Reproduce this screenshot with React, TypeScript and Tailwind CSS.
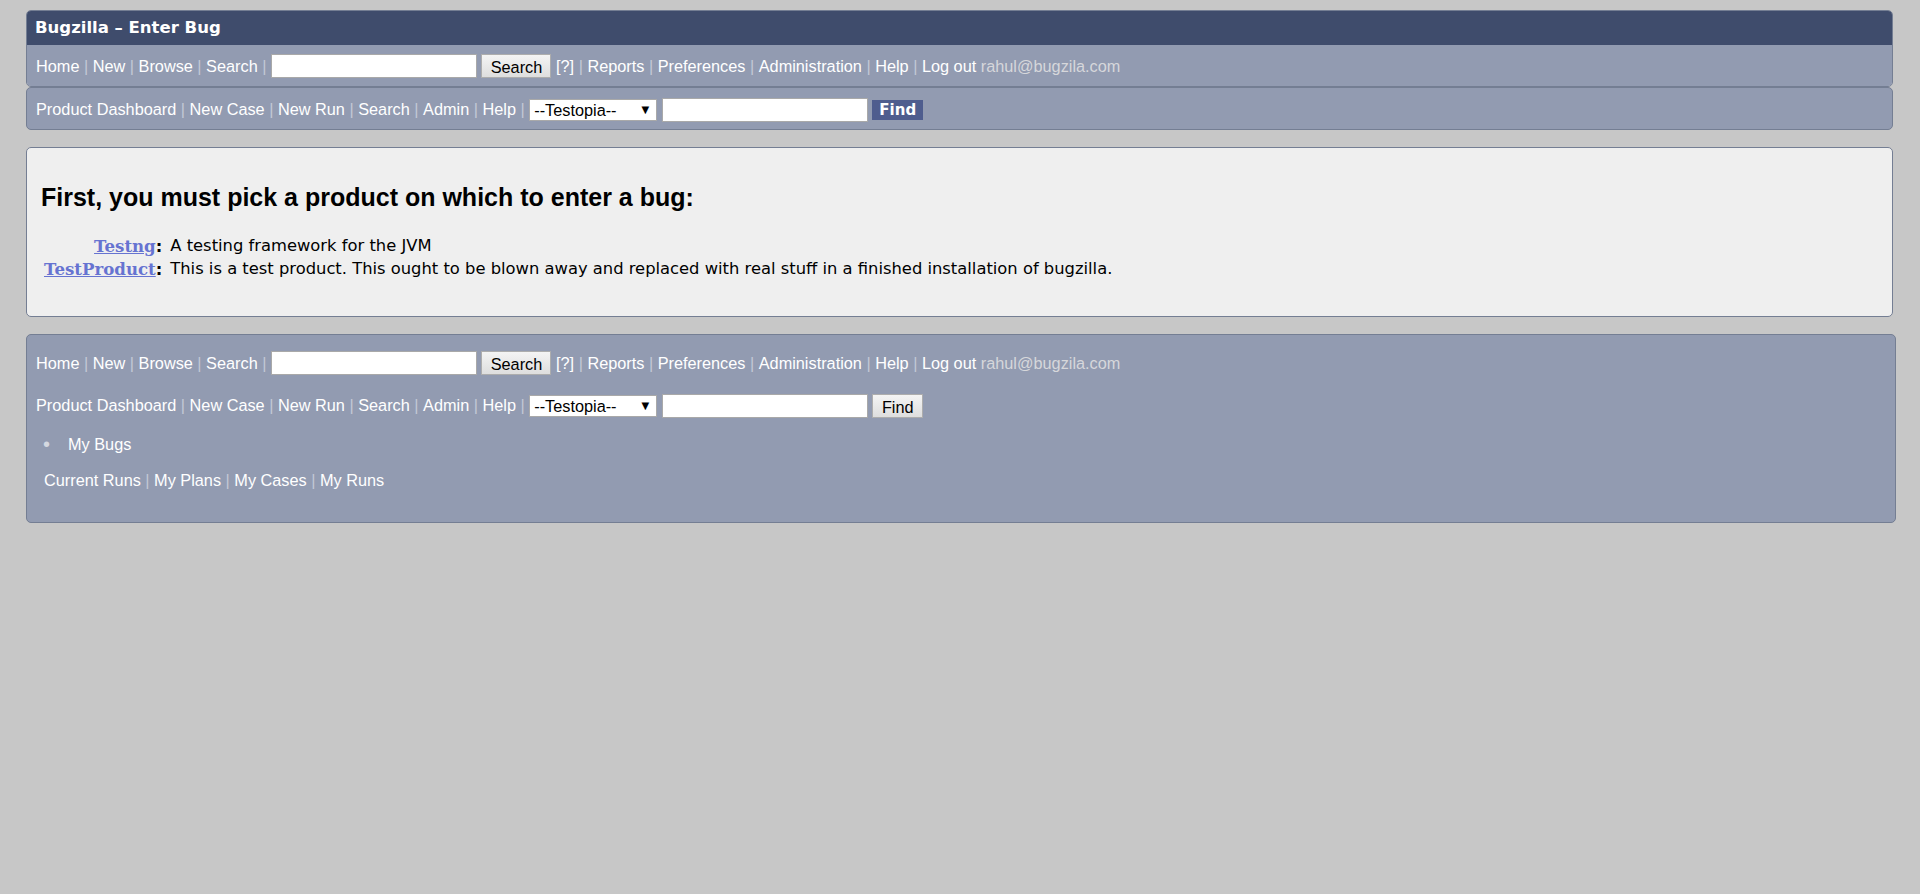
import React from "react";

const Sep = () => <span className="px-[4.53px] text-[#c3c8d6]">|</span>;

const Link = ({ children, className = "" }: { children: React.ReactNode; className?: string }) => (
  <a href="#" className={`text-white no-underline ${className}`}>
    {children}
  </a>
);

const GreyButton = ({ children, w }: { children: React.ReactNode; w: string }) => (
  <button
    className={`ml-[4.53px] h-[24px] ${w} border border-[#adadad] bg-linear-to-b from-[#f4f4f4] to-[#dedede] text-black`}
  >
    {children}
  </button>
);

const TextInput = ({ className = "" }: { className?: string }) => (
  <input type="text" className={`h-[24px] w-[206px] border border-[#a9a9a9] bg-white ${className}`} />
);

const Select = () => (
  <span className="relative block">
    <select className="block h-[22px] w-[128px] appearance-none border border-[#a9a9a9] bg-white pl-[4px] leading-[20px] text-black">
      <option>--Testopia--</option>
    </select>
    <span className="pointer-events-none absolute right-[8px] top-[5px] font-['DejaVu_Sans',sans-serif] text-[10px] leading-[12px] text-black">
      ▼
    </span>
  </span>
);

const MainLinks = () => (
  <div className="flex items-center whitespace-nowrap">
    <Link>Home</Link>
    <Sep />
    <Link>New</Link>
    <Sep />
    <Link>Browse</Link>
    <Sep />
    <Link>Search</Link>
    <Sep />
    <TextInput />
    <GreyButton w="w-[70px]">Search</GreyButton>
    <Link className="ml-[4.53px]">[?]</Link>
    <Sep />
    <Link>Reports</Link>
    <Sep />
    <Link>Preferences</Link>
    <Sep />
    <Link>Administration</Link>
    <Sep />
    <Link>Help</Link>
    <Sep />
    <Link>Log out</Link>
    <span className="ml-[4.53px] text-[#d6d7db]">rahul@bugzila.com</span>
  </div>
);

const TestopiaLinks = ({ headerFind }: { headerFind: boolean }) => (
  <div className="flex items-center whitespace-nowrap">
    <Link>Product Dashboard</Link>
    <Sep />
    <Link>New Case</Link>
    <Sep />
    <Link>New Run</Link>
    <Sep />
    <Link>Search</Link>
    <Sep />
    <Link>Admin</Link>
    <Sep />
    <Link>Help</Link>
    <Sep />
    <Select />
    <TextInput className="ml-[4.53px]" />
    {headerFind ? (
      <button className="ml-[4.53px] h-[20px] w-[51px] bg-[#4f5d8e] font-['DejaVu_Sans',Verdana,sans-serif] text-[15px] font-bold leading-[20px] text-white">
        Find
      </button>
    ) : (
      <GreyButton w="w-[51px]">Find</GreyButton>
    )}
  </div>
);

const products = [
  { name: "Testng", desc: "A testing framework for the JVM" },
  {
    name: "TestProduct",
    desc: "This is a test product. This ought to be blown away and replaced with real stuff in a finished installation of bugzilla.",
  },
];

export default function App() {
  return (
    <div className="min-h-[894px] bg-[#c7c7c7] pl-[26px] pr-[27px] pt-[10px] font-['Liberation_Sans',Arial,sans-serif] text-[16.3px]">
      {/* Header */}
      <div className="overflow-hidden rounded-[5px] border border-[#747e93]">
        <div className="flex h-[34px] items-center bg-[#3f4c6c] pl-[8px] font-['DejaVu_Sans',Verdana,sans-serif] text-[16.5px] font-bold text-white">
          Bugzilla – Enter Bug
        </div>
        <div className="flex h-[41px] items-center bg-[#929bb1] pl-[9px] pt-[1px]">
          <MainLinks />
        </div>
      </div>
      <div className="flex h-[43px] items-center rounded-[5px] border border-[#747e93] bg-[#929bb1] pl-[9px] pt-[2px]">
        <TestopiaLinks headerFind />
      </div>

      {/* Body */}
      <div className="mt-[17px] rounded-[5px] border border-[#747e93] bg-[#efefef] pb-[35px] pl-[14px] pt-[35px]">
        <h2 className="mb-[23px] font-['Liberation_Sans',Arial,sans-serif] text-[25px] font-bold leading-[29px] text-black">
          First, you must pick a product on which to enter a bug:
        </h2>
        <div className="ml-[3px] grid grid-cols-[auto_1fr] gap-x-[8px] font-['DejaVu_Sans',Verdana,sans-serif] text-[16.35px] leading-[22px] text-black">
          {products.map((p) => (
            <React.Fragment key={p.name}>
              <div className="text-right font-bold">
                <a href="#" className="font-['DejaVu_Serif',serif] text-[16.6px] text-[#6673d1] underline">
                  {p.name}
                </a>
                <span>:</span>
              </div>
              <div>{p.desc}</div>
            </React.Fragment>
          ))}
        </div>
      </div>

      {/* Footer */}
      <div className="mr-[-3px] mt-[17px] rounded-[5px] border border-[#747e93] bg-[#929bb1] pb-[32px] pl-[9px] pt-[7px]">
        <div className="flex h-[42px] items-center">
          <MainLinks />
        </div>
        <div className="flex h-[43px] items-center">
          <TestopiaLinks headerFind={false} />
        </div>
        <ul className="mt-[7px] flex h-[20px] items-center">
          <li className="flex items-center">
            <span className="w-[32px] pl-[7px] text-[20px] leading-[20px] text-[#d5d8e0]">•</span>
            <Link>My Bugs</Link>
          </li>
        </ul>
        <div className="mt-[16px] flex h-[20px] items-center pl-[8px]">
          <div className="flex items-center whitespace-nowrap">
            <Link>Current Runs</Link>
            <Sep />
            <Link>My Plans</Link>
            <Sep />
            <Link>My Cases</Link>
            <Sep />
            <Link>My Runs</Link>
          </div>
        </div>
      </div>
    </div>
  );
}
